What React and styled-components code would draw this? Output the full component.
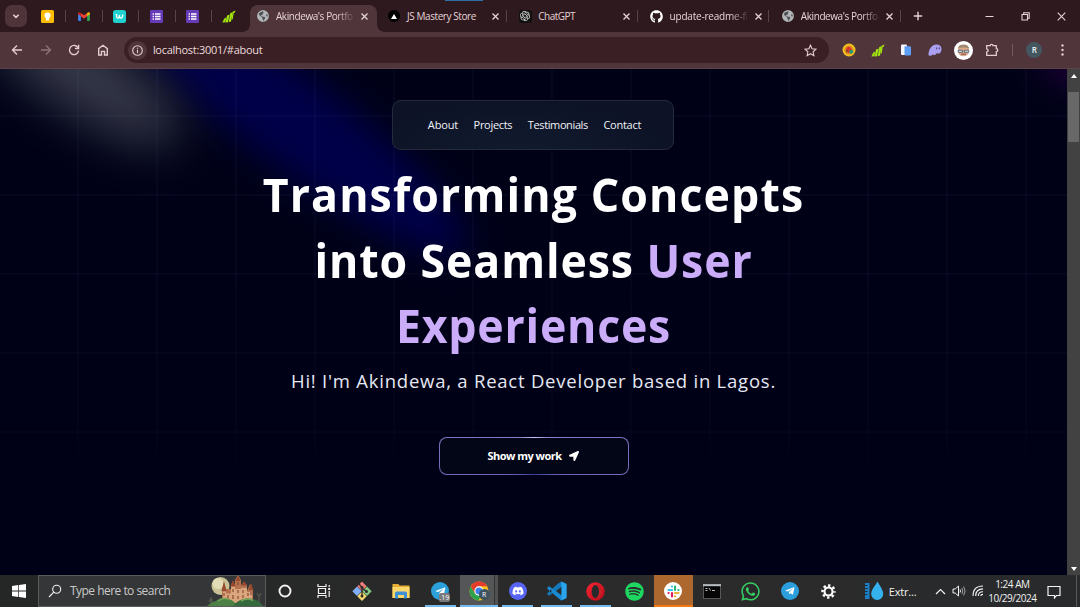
import React from "react";
import styled, { createGlobalStyle, css } from "styled-components";
import {
  FaGithub,
  FaDiscord,
  FaSpotify,
  FaWhatsapp,
  FaTelegramPlane,
  FaLocationArrow,
  FaGlobeAmericas,
} from "react-icons/fa";
import { SiOpenai } from "react-icons/si";

const Global = createGlobalStyle`
  *, *::before, *::after { box-sizing: border-box; }
  html, body { margin: 0; padding: 0; background: #000117; overflow: hidden; }
  body { font-family: "Open Sans", "Noto Sans", sans-serif; }
`;

const Screen = styled.div`
  width: 1080px;
  height: 607px;
  display: flex;
  flex-direction: column;
  overflow: hidden;
  position: relative;
`;

/* ---------- browser chrome ---------- */

const TabStrip = styled.header`
  height: 32px;
  flex: none;
  display: flex;
  align-items: flex-start;
  background: #2e191f;
  color: #e6d3d6;
`;

const LoadingLine = styled.span`
  position: absolute;
  top: 0;
  left: 445px;
  width: 38px;
  height: 1px;
  background: #2f6fa8;
`;

const TabSearch = styled.div`
  width: 22px;
  height: 22px;
  margin: 5px 2px 0 5px;
  border-radius: 7px;
  background: #4f343a;
  display: grid;
  place-items: center;
`;

const Pinned = styled.div`
  width: 36.4px;
  height: 32px;
  display: grid;
  place-items: center;
  position: relative;
  ${(p) =>
    p.$divider &&
    css`
      &::after {
        content: "";
        position: absolute;
        right: -1px;
        top: 10px;
        width: 1px;
        height: 12px;
        background: #5a4247;
      }
    `}
`;

const Tab = styled.div`
  width: 131.3px;
  height: 32px;
  flex: none;
  display: flex;
  align-items: center;
  padding-left: 10px;
  position: relative;
  ${(p) =>
    p.$divider &&
    css`
      &::after {
        content: "";
        position: absolute;
        right: 2px;
        top: 10px;
        width: 1px;
        height: 12px;
        background: #5a4247;
      }
    `}
`;

const ActiveTab = styled(Tab)`
  width: 127px;
  margin: 5px 0.5px 0 2.6px;
  height: 27px;
  padding: 0 0 5px 6.5px;
  background: #50353b;
  border-radius: 8px 8px 0 0;
  &::before,
  &::after {
    content: "";
    position: absolute;
    bottom: 0;
    width: 7px;
    height: 7px;
  }
  &::before {
    left: -7px;
    background: radial-gradient(circle at 0 0, transparent 6.5px, #50353b 7px);
  }
  &::after {
    right: -7px;
    background: radial-gradient(circle at 100% 0, transparent 6.5px, #50353b 7px);
  }
`;

const Favicon = styled.span`
  width: 13px;
  height: 13px;
  flex: none;
  display: grid;
  place-items: center;
`;

const TabTitle = styled.span`
  width: 77px;
  margin-left: 6.5px;
  flex: none;
  white-space: nowrap;
  font-size: 10px;
  font-weight: 500;
  line-height: 14px;
  letter-spacing: ${(p) => p.$spacing || "-0.42px"};
  ${(p) =>
    p.$fade &&
    css`
      mask-image: linear-gradient(90deg, #000 78%, rgba(0, 0, 0, 0.15));
    `}
`;

const TabClose = styled.span`
  width: 9px;
  height: 9px;
  margin-left: 7px;
  display: grid;
  place-items: center;
`;

const NewTab = styled.div`
  width: 26px;
  height: 32px;
  margin-left: 2px;
  display: grid;
  place-items: center;
`;

const WindowControls = styled.div`
  display: flex;
  margin-left: auto;
`;

const WindowButton = styled.div`
  width: 36.4px;
  height: 32px;
  display: grid;
  place-items: center;
`;

const Toolbar = styled.div`
  height: 37px;
  flex: none;
  display: flex;
  align-items: center;
  background: #50353b;
  border-bottom: 1px solid #5c4348;
  padding-left: 3px;
  color: #e3cdd1;
`;

const ToolButton = styled.div`
  width: 28.6px;
  height: 36px;
  flex: none;
  display: grid;
  place-items: center;
  opacity: ${(p) => (p.$dim ? 0.4 : 1)};
`;

const AddressBar = styled.div`
  width: 705px;
  height: 26px;
  margin-left: 6.5px;
  margin-right: 6px;
  padding: 0 12px 0 4px;
  border-radius: 13px;
  background: #3a2024;
  display: flex;
  align-items: center;
`;

const SiteInfo = styled.span`
  width: 19px;
  height: 19px;
  border-radius: 50%;
  background: #50353b;
  display: grid;
  place-items: center;
`;

const Url = styled.span`
  flex: 1;
  margin-left: 6px;
  font-size: 11px;
  line-height: 16px;
  letter-spacing: -0.28px;
  color: #ecdcde;
`;

const ToolDivider = styled.span`
  width: 1px;
  height: 12px;
  margin: 0 6.5px 0 6px;
  background: #735a5f;
`;

const Profile = styled.span`
  width: 16px;
  height: 16px;
  border-radius: 50%;
  background: #44565f;
  color: #eef3f5;
  font-size: 8px;
  font-weight: 600;
  line-height: 16px;
  text-align: center;
`;

/* ---------- page ---------- */

const Viewport = styled.div`
  height: 506px;
  flex: none;
  display: flex;
`;

const Page = styled.main`
  flex: 1;
  position: relative;
  overflow: hidden;
  background: #000117;
  isolation: isolate;
`;

const Backdrop = styled.svg`
  position: absolute;
  inset: 0;
  z-index: -2;
`;

const GridOverlay = styled.div`
  position: absolute;
  inset: 0;
  z-index: -1;
  background-image: linear-gradient(90deg, transparent 77px, rgba(140, 160, 220, 0.038) 77px),
    linear-gradient(180deg, transparent 77px, rgba(140, 160, 220, 0.038) 77px);
  background-size: 79px 79px;
  background-position: 0 -31px;
  mask-image: linear-gradient(180deg, #000 35%, rgba(0, 0, 0, 0.5) 72%, transparent 80%);
`;

const Nav = styled.nav`
  width: 282px;
  height: 50px;
  margin: 31px auto 0;
  position: relative;
  left: -0.5px;
  border: 1px solid #252b3b;
  border-radius: 9px;
  background: radial-gradient(ellipse at 45% 100%, #111b2d, #0d1226 75%);
  display: flex;
  align-items: center;
  justify-content: center;
  gap: 15.5px;
  padding: 0 0 1px 3px;
`;

const NavLink = styled.a`
  font-size: 11px;
  font-weight: 500;
  line-height: 16px;
  letter-spacing: ${(p) => p.$spacing};
  color: #f1f3f8;
`;

const Heading = styled.h1`
  margin: 12px 0 0;
  text-align: center;
  font-size: 47px;
  line-height: 65.6px;
  font-weight: 700;
  color: #fff;
`;

const Line = styled.span`
  display: block;
  transform: scaleX(0.95);
  letter-spacing: ${(p) => p.$spacing};
`;

const Accent = styled.span`
  color: #cbacf9;
`;

const Intro = styled.p`
  margin: 8px 0 0;
  text-align: center;
  font-size: 18.5px;
  line-height: 28px;
  letter-spacing: 0.77px;
  color: #e6e8f2;
`;

const WorkButton = styled.button`
  display: flex;
  align-items: center;
  justify-content: center;
  gap: 7px;
  width: 190px;
  height: 38px;
  margin: 42px auto 0;
  position: relative;
  left: 0.5px;
  padding: 1px 2px 0 0;
  border: 1px solid transparent;
  border-radius: 8px;
  background:
    linear-gradient(#030616, #030616) padding-box,
    conic-gradient(#d9c6ff 0%, #8d83cd 10%, #6962b0 35%, #393b9c 50%, #6962b0 65%, #8d83cd 90%, #d9c6ff 100%) border-box;
  color: #fff;
  font: 700 11px/16px "Open Sans", "Noto Sans", sans-serif;
  letter-spacing: -0.52px;
`;

const Scrollbar = styled.div`
  width: 13px;
  background: #424242;
  display: flex;
  flex-direction: column;
  align-items: center;
`;

const ScrollThumb = styled.div`
  width: 11px;
  height: 50px;
  margin-top: 10px;
  margin-bottom: auto;
  background: #686868;
`;

const ScrollArrow = styled.div`
  height: 13px;
  display: grid;
  place-items: center;
`;

/* ---------- taskbar ---------- */

const Taskbar = styled.footer`
  height: 32px;
  flex: none;
  display: flex;
  align-items: center;
  background: linear-gradient(90deg, #252626, #2b2b2b 60%, #292a2c);
  color: #f2f2f2;
`;

const Start = styled.div`
  width: 38px;
  display: grid;
  place-items: center;
`;

const SearchBox = styled.div`
  width: 228px;
  height: 32px;
  margin-right: -0.6px;
  flex: none;
  display: flex;
  align-items: center;
  padding-left: 9px;
  border: 1px solid #5b5b5b;
  background: #353637;
`;

const SearchText = styled.span`
  width: 137px;
  margin-left: 8px;
  flex: none;
  font-size: 12px;
  line-height: 18px;
  letter-spacing: -0.53px;
  color: #c9c9c9;
`;

const TaskItem = styled.div`
  width: 38.83px;
  height: 32px;
  flex: none;
  display: grid;
  place-items: center;
  position: relative;
  background: ${(p) => p.$bg || "none"};
  ${(p) =>
    p.$line &&
    css`
      &::after {
        content: "";
        position: absolute;
        bottom: 0;
        left: ${p.$bg ? 0 : 4}px;
        right: ${p.$bg ? 0 : 4}px;
        height: 2px;
        background: ${p.$line};
      }
    `}
`;

const Disc = styled.span`
  width: ${(p) => p.$size || 18}px;
  height: ${(p) => p.$size || 18}px;
  border-radius: 50%;
  background: ${(p) => p.$color};
  color: #fff;
  display: grid;
  place-items: center;
`;

const Badge = styled.span`
  position: absolute;
  left: ${(p) => p.$left}px;
  top: ${(p) => p.$top}px;
  min-width: 11px;
  height: ${(p) => (p.$round ? 11 : 9)}px;
  line-height: ${(p) => (p.$round ? 11 : 9)}px;
  border-radius: ${(p) => (p.$round ? "50%" : "2px")};
  background: ${(p) => p.$color};
  color: #fff;
  text-align: center;
  font-size: 7px;
`;

const Weather = styled.div`
  display: flex;
  align-items: center;
  margin-left: 16px;
  width: 71.500px;
  font-size: 11px;
  letter-spacing: -0.2px;
  gap: 5px;
`;

const Tray = styled.div`
  display: flex;
  align-items: center;
  gap: 6px;
`;

const Clock = styled.div`
  width: 48px;
  margin-left: 4px;
  text-align: center;
  font-size: 10px;
  line-height: 14px;
  letter-spacing: -0.47px;
  white-space: nowrap;
  display: flex;
  flex-direction: column;
  align-items: center;
`;

const Notify = styled.div`
  margin-left: 11px;
  height: 18px;
`;

const PeekEdge = styled.div`
  width: 1px;
  height: 32px;
  margin-left: auto;
  margin-right: 3px;
  background: #58595a;
`;

/* ---------- drawings ---------- */

const Stroke = ({ size = 12, w = 1.4, d, children, vb = 12 }) => (
  <svg width={size} height={size} viewBox={`0 0 ${vb} ${vb}`} fill="none" stroke="currentColor" strokeWidth={w}>
    {d && <path d={d} />}
    {children}
  </svg>
);

const CloseX = () => <Stroke size={9} vb={9} w={1.3} d="M1.5 1.5l6 6M7.5 1.5l-6 6" />;

const Keep = () => (
  <svg width="13" height="13" viewBox="0 0 13 13">
    <rect width="13" height="13" rx="1.5" fill="#fbbc04" />
    <circle cx="6.5" cy="5.6" r="3.1" fill="#fff" />
    <path d="M5 8h3v2.4H5z" fill="#fff" />
  </svg>
);

const Gmail = () => (
  <svg width="12" height="9" viewBox="0 0 13 10">
    <path d="M0 1.5L3 3.8V10H1a1 1 0 0 1-1-1z" fill="#4285f4" />
    <path d="M13 1.5L10 3.8V10h2a1 1 0 0 0 1-1z" fill="#34a853" />
    <path d="M3 1v3.8l3.5 2.7L10 4.8V1L6.5 3.7z" fill="#ea4335" />
    <path d="M0 1.6C0 .2 1.600-.3 3 1v3.8L0 2.600z" fill="#c5221f" />
    <path d="M13 1.600C13 .2 11.400-.3 10 1v3.800L13 2.600z" fill="#fbbc04" />
  </svg>
);

const TealW = () => (
  <svg width="13" height="13" viewBox="0 0 13 13">
    <rect width="13" height="13" rx="2.500" fill="#1fd0cf" />
    <path d="M2.500 4.600h1.200c-.4 2.200.2 3.600 1.300 3.500 1.200-.1 1.300-1.700 1.500-3-.1 1.800.1 3 1.300 3 1.400 0 1.900-1.600 2-3.600" fill="none" stroke="#fff" strokeWidth="1.300" />
  </svg>
);

const Forms = () => (
  <svg width="13" height="13" viewBox="0 0 13 13">
    <rect width="13" height="13" rx="1" fill="#673ab7" />
    <path d="M5 4h5.500M5 6.500h5.500M5 9h5.500" stroke="#fff" strokeWidth="1.300" />
    <path d="M2.600 4h1.300M2.600 6.500h1.300M2.600 9h1.300" stroke="#fff" strokeWidth="1.300" />
  </svg>
);

const GreenBars = () => (
  <svg width="14" height="13" viewBox="0 0 14 13" fill="#a3e60c">
    <path d="M2.300 8.400L4.200 7.600l-.9 4.700-2.900.3z" />
    <path d="M5.100 5.400l2.500-.9-1.600 7.700-2.500.2z" />
    <path d="M8.300 3l2.400-.7-1.700 9.100-2.300.9z" />
    <path d="M10.600 1.700L13.600.4l-.9 2.300-1 .3-1 6.200-1.200.6z" />
  </svg>
);

const GlobeIcon = () => (
  <Disc $size={12} $color="#4d4f52">
    <FaGlobeAmericas size={12} color="#b3b6b9" />
  </Disc>
);

const Vercel = () => (
  <Disc $size={12} $color="#000">
    <svg width="6" height="5" viewBox="0 0 6 5">
      <path d="M3 0l3 5H0z" fill="#fff" />
    </svg>
  </Disc>
);

const GptBox = styled.span`
  width: 13px;
  height: 13px;
  border-radius: 3px;
  background: #111;
  display: grid;
  place-items: center;
`;

const ColorBall = () => (
  <svg width="14" height="14" viewBox="0 0 14 14">
    <circle cx="7" cy="7" r="6.500" fill="#f2c01d" />
    <circle cx="7" cy="7" r="4.500" fill="#df8a25" />
    <path d="M4 6.500Q5 3 8 4l2 3-3 3-3-1z" fill="#d8332b" />
    <circle cx="9.200" cy="8.800" r="2" fill="#229a7b" />
    <circle cx="5" cy="8" r="1" fill="#71502a" />
  </svg>
);

const PageSwap = () => (
  <svg width="12" height="12" viewBox="0 0 12 12">
    <rect x="1" y="0.500" width="6" height="10.500" rx="1" fill="#f3f6fb" />
    <rect x="4.500" y="2.300" width="6.500" height="9.200" rx="1" fill="#5c9df5" />
  </svg>
);

const Ghost = () => (
  <svg width="14" height="12" viewBox="0 0 14 12">
    <path d="M.5 11C.5 5 4 .6 8.500.6c3 0 5 1.600 5 4.300 0 3-1.700 4.700-3.300 4.700-1 0-1.300-.7-1.300-.7S7.700 11 6.300 11c-1 0-1.300-.8-1.300-.8s-1 1.500-2.700 1.500C1.200 11.700.5 11.400.5 11z" fill="#ab9ff2" />
    <path d="M8.600 3.500v1.800M11.300 3.500v1.800" stroke="#50406f" strokeWidth="1.100" />
  </svg>
);

const Avatar = () => (
  <svg width="19" height="19" viewBox="0 0 19 19">
    <circle cx="9.500" cy="9.500" r="9.500" fill="#fff" />
    <path d="M4 8Q4.500 4 9.500 4T15 8l-.6 5Q12 15.500 9.500 15.300 6.500 15.500 4.600 13z" fill="#dba98c" />
    <path d="M4 7.500Q4.500 3.500 9.500 3.500T15 7.500q-5.500-2-11 0z" fill="#a08a72" />
    <path d="M4.200 9.300h4.400v2H4.200zM10.400 9.300h4.400v2h-4.400z" fill="#cfe6f2" stroke="#3b4854" strokeWidth=".7" />
    <path d="M7 13.200h5" stroke="#8a5a46" strokeWidth="1.100" />
  </svg>
);

const Puzzle = () => (
  <Stroke size={14} vb={14} w={1.300}>
    <path d="M1.700 2.700h3.500c0-1.900 2.800-1.900 2.800 0h3.300v3c2 0 2 2.900 0 2.900v3.700H1.700V9c2-.2 2-2.900 0-3.100z" />
  </Stroke>
);

const Castle = () => (
  <svg width="56" height="30" viewBox="0 0 56 30">
    <circle cx="13.500" cy="10" r="9" fill="#c9c096" />
    <circle cx="11" cy="7.500" r="5.500" fill="#e3dbb6" />
    <path d="M15 27V15l2-7 2 7v-2h5V9l2-4 2 4V4l3-5 3 5v5l3-3 3 3v6l3-7 3 7v12z" fill="#b4724e" />
    <path d="M16 27V15.500h3v2h5V11h4v2h6v-1h6v4h5v11z" fill="#dba67d" />
    <path d="M14.500 15L17 5l2.500 10zM23.500 10L26 4l2.500 6zM28.500 5L31 0l2.500 5zM34 9.500l3-4.500 3 4.500zM41.500 14L44 7l2.500 7z" fill="#96482f" />
    <path d="M17 17v3M21 19v4M26 13v3M26 19v4M31 6v3M31 14v3M31 20v3M36 14v3M36 19v3M41 17v3M44 16v3" stroke="#7d4631" strokeWidth="1.100" />
    <path d="M2 26l2-4 2 4M4 22v6M50 17l2 4 2-4M52 20v7" stroke="#55564c" strokeWidth="1.300" fill="none" />
    <path d="M0 30q4-4 9-5 5-5 12-2 6 1 9 7z" fill="#4d8045" />
    <path d="M26 30q6-8 16-7.500 9 .5 14 7.500z" fill="#346a3c" />
    <path d="M11 25q5-4 11-1.500M34 25q6-3.500 12-.5" stroke="#74a457" strokeWidth="1.500" fill="none" />
  </svg>
);

const GitWin = () => (
  <svg width="20" height="20" viewBox="0 0 20 20">
    <path d="M10 .5l4.700 4.700L10 9.900 5.300 5.200z" fill="#ee7b78" />
    <path d="M5 5.500l4.700 4.700L5 14.900.3 10.200z" fill="#80aef5" />
    <path d="M15 5.500l4.700 4.700-4.700 4.700-4.700-4.700z" fill="#83c881" />
    <path d="M10 10.500l4.700 4.700L10 19.900l-4.700-4.700z" fill="#f4d96e" />
    <path d="M7 3l3 3.500v9M10 7l4.500 3.500" stroke="#302d2c" strokeWidth="1.300" fill="none" />
    <circle cx="10" cy="6.500" r="1.500" fill="#302d2c" />
    <circle cx="10" cy="15" r="1.500" fill="#302d2c" />
    <circle cx="14.500" cy="10.500" r="1.500" fill="#302d2c" />
  </svg>
);

const Explorer = () => (
  <svg width="18" height="16" viewBox="0 0 18 16">
    <path d="M.5 1h6l1 1.500h10V15H.5z" fill="#e5ad35" />
    <path d="M.5 4h17v11H.5z" fill="#fbd76b" />
    <path d="M3 15.500V10q0-1.500 1.500-1.500h9Q15 8.500 15 10v5.500h-3V12H6v3.500z" fill="#3e91d4" />
  </svg>
);

const Chrome = () => (
  <svg width="20" height="20" viewBox="0 0 20 20">
    <circle cx="10" cy="10" r="9.500" fill="#fbc116" />
    <path d="M1.800 5.200a9.500 9.500 0 0 0 7.600 14.300L14 12 6 12.500z" fill="#2da14c" />
    <path d="M1.800 5.200A9.500 9.500 0 0 1 18.300 5.300H10L5.900 12.200z" fill="#e33b2e" />
    <circle cx="10" cy="10" r="4.700" fill="#fff" />
    <circle cx="10" cy="10" r="3.600" fill="#3d7fe8" />
  </svg>
);

const VsCode = () => (
  <svg width="20" height="20" viewBox="0 0 20 20">
    <path d="M14.300.5L19.500 3v14l-5.200 2.500L5.800 12l-3.600 2.700L.5 13.800V12l10-9z" fill="#1479bd" />
    <path d="M.5 6.200l1.700-.9L14.300 14.800v4.700L.5 8z" fill="#1a8bd3" />
    <path d="M14.300.5L19.500 3v14l-5.200 2.500z" fill="#2ba4ee" />
    <path d="M14.300 6v8L9 10z" fill="#292a2b" />
    <path d="M3 8.300v3.400L4.900 10z" fill="#292a2b" />
  </svg>
);

const Opera = () => (
  <svg width="19" height="19" viewBox="0 0 19 19">
    <defs>
      <linearGradient id="op" x1="0" y1="0" x2="1" y2="1">
        <stop offset="0" stopColor="#ff2433" />
        <stop offset="1" stopColor="#b00b18" />
      </linearGradient>
    </defs>
    <circle cx="9.500" cy="9.500" r="9.200" fill="url(#op)" />
    <path d="M12 2.200q3.500 2.200 3.500 7.300T12 16.800q-3-1.700-3-7.300t3-7.300z" fill="#c7222c" />
    <ellipse cx="9.300" cy="9.500" rx="3.700" ry="6.500" fill="#292a2b" />
  </svg>
);

const Slack = () => (
  <Disc $color="#fff">
    <svg width="13" height="13" viewBox="0 0 13 13" strokeWidth="2.200" strokeLinecap="round" fill="none">
      <path d="M5 1.500v.1M1.500 5h3.500" stroke="#36c5f0" />
      <path d="M8 1.500V5M11.500 5h-.1" stroke="#2eb67d" />
      <path d="M8 8h3.500M8 11.500v-.1" stroke="#ecb22e" />
      <path d="M5 8v3.500M1.500 8h.1" stroke="#e01e5a" />
    </svg>
  </Disc>
);

const Terminal = () => (
  <svg width="18" height="15" viewBox="0 0 18 15">
    <rect x=".5" y=".5" width="17" height="14" fill="#060606" stroke="#55585a" />
    <path d="M0 1.200h18" stroke="#b9bcbe" strokeWidth="2" />
    <path d="M2.500 4.500h2M2.500 6.500h2M6 4l1.500 2.500M9 6.500h3" stroke="#bbb" fill="none" />
  </svg>
);

const Gear = () => (
  <svg width="15" height="15" viewBox="0 0 16 16" fill="none" stroke="#fff">
    <circle cx="8" cy="8" r="4.300" strokeWidth="2.300" />
    <circle cx="8" cy="8" r="6.400" strokeWidth="2.600" strokeDasharray="2.513 2.513" strokeDashoffset="1.250" />
  </svg>
);

const Droplet = () => (
  <svg width="20" height="20" viewBox="0 0 20 20">
    <path d="M1 2h4.500v16H1z" fill="#1a7fc7" />
    <path d="M1 4.500h2.500M1 7.500h2.500M1 10.500h2.500M1 13.500h2.500" stroke="#292a2b" />
    <path d="M13.500.5c2 4 5.700 8 5.700 12.500a5.900 6 0 0 1-12 0C7.200 8.500 11.500 4.500 13.500.5z" fill="#35b1ee" />
  </svg>
);

const tabs = [
  { title: "JS Mastery Store", icon: <Vercel />, spacing: "-0.42px" },
  { title: "ChatGPT", icon: <GptBox><SiOpenai size={10} color="#e8e8e8" /></GptBox>, spacing: "-0.5px" },
  { title: "update-readme-fi", icon: <FaGithub size={13} color="#fff" />, fade: true, spacing: "-0.2px" },
  { title: "Akindewa's Portfo", icon: <GlobeIcon />, fade: true },
];

const pinned = [<Keep />, <Gmail />, <TealW />, <Forms />, <Forms />, <GreenBars />];
const extensions = [<ColorBall />, <GreenBars />, <PageSwap />, <Ghost />, <Avatar />, <Puzzle />];

const BLUE = "#76b9ed";

const taskApps = [
  { icon: <Stroke size={14} vb={14} w={1.900}><circle cx="7" cy="7" r="5.500" /></Stroke> },
  { icon: <Stroke size={14} vb={14} w={1.200}><path d="M1 0v2.500h8V0M1 14v-2.500h8V14M1.500 4.500h7v5h-7zM12.200 1v2M12.200 7v6" /><path d="M11.200 5h2" strokeWidth="2" /></Stroke> },
  { icon: <GitWin /> },
  { icon: <Explorer /> },
  { icon: <Disc $color="#2ba0da"><FaTelegramPlane size={11} /></Disc>, line: BLUE, badge: { text: ".19", left: 18, top: 18, color: "#77797b" } },
  { icon: <Chrome />, line: BLUE, bg: "linear-gradient(90deg, #555657 0 90%, #333 90% 92%, #505152 92%)", badge: { text: "R", left: 19, top: 14, color: "#3d5360", round: true } },
  { icon: <Disc $color="#5865f2"><FaDiscord size={12} /></Disc>, line: BLUE },
  { icon: <VsCode />, line: BLUE },
  { icon: <Opera />, line: BLUE },
  { icon: <FaSpotify size={19} color="#1ed760" /> },
  { icon: <Slack />, line: "#f5770f", bg: "#ad682f" },
  { icon: <Terminal /> },
  { icon: <FaWhatsapp size={21} color="#35cf64" /> },
  { icon: <Disc $color="#2b9fdb"><FaTelegramPlane size={10} /></Disc> },
  { icon: <Gear /> },
];

export default function App() {
  return (
    <Screen>
      <Global />
      <TabStrip>
        <TabSearch><Stroke size={8} vb={8} w={1.500} d="M1.300 2.700L4 5.400l2.700-2.700" /></TabSearch>
        {pinned.map((icon, i) => (
          <Pinned key={i} $divider={i < 5}>{icon}</Pinned>
        ))}
        <ActiveTab>
          <Favicon><GlobeIcon /></Favicon>
          <TabTitle $fade>Akindewa's Portfo</TabTitle>
          <TabClose><CloseX /></TabClose>
        </ActiveTab>
        {tabs.map((t) => (
          <Tab key={t.title} $divider>
            <Favicon>{t.icon}</Favicon>
            <TabTitle $fade={t.fade} $spacing={t.spacing}>{t.title}</TabTitle>
            <TabClose><CloseX /></TabClose>
          </Tab>
        ))}
        <NewTab><Stroke size={10} vb={10} w={1.400} d="M5 .8v8.400M.8 5h8.400" /></NewTab>
        <WindowControls>
          <WindowButton><Stroke size={9} vb={9} w={1} d="M.5 4.500h8" /></WindowButton>
          <WindowButton><Stroke size={9} vb={9} w={1.100}><path d="M1 2.500h5.500V8H1zM2.700 2.500V.8h5.500v5.500H6.500" /></Stroke></WindowButton>
          <WindowButton><Stroke size={9} vb={9} w={1.100} d="M.7.7l7.600 7.600M8.300.7L.7 8.300" /></WindowButton>
        </WindowControls>
        <LoadingLine />
      </TabStrip>

      <Toolbar>
        <ToolButton><Stroke d="M11 6H1.800M6 1.500L1.500 6 6 10.500" /></ToolButton>
        <ToolButton $dim><Stroke d="M1 6h9.200M6 1.500L10.500 6 6 10.500" /></ToolButton>
        <ToolButton><Stroke><path d="M10.200 4A4.600 4.600 0 1 0 10.600 6.700" /><path d="M10.600.8V4.500H7" /></Stroke></ToolButton>
        <ToolButton><Stroke d="M1.700 11V4.700L6 1.300l4.300 3.400V11H7.500V7.400h-3V11z" /></ToolButton>
        <AddressBar>
          <SiteInfo>
            <Stroke size={11} vb={11} w={1.100}><circle cx="5.500" cy="5.500" r="4.800" /><path d="M5.500 4.800v3.200M5.500 2.700v1.100" /></Stroke>
          </SiteInfo>
          <Url>localhost:3001/#about</Url>
          <Stroke size={13} vb={13} w={1.100} d="M6.500 1.200l1.600 3.600 3.900.4-2.900 2.600.8 3.900-3.400-2-3.400 2 .8-3.900L1 5.200l3.900-.4z" />
        </AddressBar>
        {extensions.map((icon, i) => (
          <ToolButton key={i}>{icon}</ToolButton>
        ))}
        <ToolDivider />
        <ToolButton><Profile>R</Profile></ToolButton>
        <ToolButton>
          <svg width="3" height="12" viewBox="0 0 3 12" fill="currentColor">
            <circle cx="1.500" cy="1.500" r="1.200" /><circle cx="1.500" cy="6" r="1.200" /><circle cx="1.500" cy="10.500" r="1.200" />
          </svg>
        </ToolButton>
      </Toolbar>

      <Viewport>
        <Page>
          <Backdrop width="1067" height="506" viewBox="0 0 1067 506">
            <defs>
              <filter id="soft" x="-50%" y="-100%" width="200%" height="300%" colorInterpolationFilters="sRGB"><feGaussianBlur stdDeviation="17" /></filter>
              <filter id="wide" x="-50%" y="-150%" width="200%" height="400%" colorInterpolationFilters="sRGB"><feGaussianBlur stdDeviation="24" /></filter>
            </defs>
            <ellipse cx="285" cy="46" rx="225" ry="46" fill="#000049" transform="rotate(37 285 46)" filter="url(#soft)" />
            <ellipse cx="82" cy="4" rx="115" ry="38" fill="#363949" transform="rotate(34 82 4)" filter="url(#wide)" />
            <ellipse cx="1075" cy="-8" rx="42" ry="22" fill="#200038" transform="rotate(30 1075 -8)" filter="url(#soft)" />
          </Backdrop>
          <GridOverlay />
          <Nav>
            <NavLink $spacing="-0.15px">About</NavLink>
            <NavLink $spacing="-0.3px">Projects</NavLink>
            <NavLink $spacing="-0.38px">Testimonials</NavLink>
            <NavLink $spacing="-0.25px">Contact</NavLink>
          </Nav>
          <Heading>
            <Line $spacing="1.18px">Transforming Concepts</Line>
            <Line $spacing="0.95px">into Seamless <Accent>User</Accent></Line>
            <Line $spacing="0.8px"><Accent>Experiences</Accent></Line>
          </Heading>
          <Intro>Hi! I'm Akindewa, a React Developer based in Lagos.</Intro>
          <WorkButton>Show my work <FaLocationArrow size={10} /></WorkButton>
        </Page>
        <Scrollbar>
          <ScrollArrow><svg width="6" height="4" viewBox="0 0 6 4"><path d="M3 0l3 4H0z" fill="#fff" /></svg></ScrollArrow>
          <ScrollThumb />
          <ScrollArrow><svg width="6" height="4" viewBox="0 0 6 4"><path d="M3 4l3-4H0z" fill="#fff" /></svg></ScrollArrow>
        </Scrollbar>
      </Viewport>

      <Taskbar>
        <Start>
          <svg width="14" height="14" viewBox="0 0 14 14" fill="#fff">
            <path d="M0 2l6.300-.9v5.500H0zM7 1l7-1v6.600H7zM0 7.400h6.300v5.500L0 12zM7 7.400h7V14l-7-1z" />
          </svg>
        </Start>
        <SearchBox>
          <Stroke size={14} vb={14} w={1.100}><circle cx="8.700" cy="5.300" r="4" /><path d="M5.800 8.200L1 13" /></Stroke>
          <SearchText>Type here to search</SearchText>
          <Castle />
        </SearchBox>
        {taskApps.map((a, i) => (
          <TaskItem key={i} $line={a.line} $bg={a.bg}>
            {a.icon}
            {a.badge && (
              <Badge $left={a.badge.left} $top={a.badge.top} $color={a.badge.color} $round={a.badge.round}>
                {a.badge.text}
              </Badge>
            )}
          </TaskItem>
        ))}
        <Weather><Droplet />Extr...</Weather>
        <Tray>
          <Stroke size={11} vb={11} w={1.200} d="M1 8l4.500-4.500L10 8" />
          <Stroke size={14} vb={14} w={1}><path d="M1 5h2.200L6.500 2v10L3.200 9H1zM8 5.500q1 1.500 0 3" /><path d="M9.800 4q2 3 0 6M11.600 2.500q3 4.500 0 9" opacity=".6" /></Stroke>
          <Stroke size={12} vb={12} w={1.100}><path d="M1 11Q1 1 11 1M3.700 11Q3.700 3.900 11 3.900M6.300 11Q6.300 6.800 11 6.800M8.800 11Q8.800 9.400 11 9.400" /></Stroke>
        </Tray>
        <Clock><span>1:24 AM</span><span>10/29/2024</span></Clock>
        <Notify><Stroke size={14} vb={14} w={1.200} d="M1 1.500h12v9H9.500L7.500 13V10.500H1z" /></Notify>
        <PeekEdge />
      </Taskbar>
    </Screen>
  );
}
